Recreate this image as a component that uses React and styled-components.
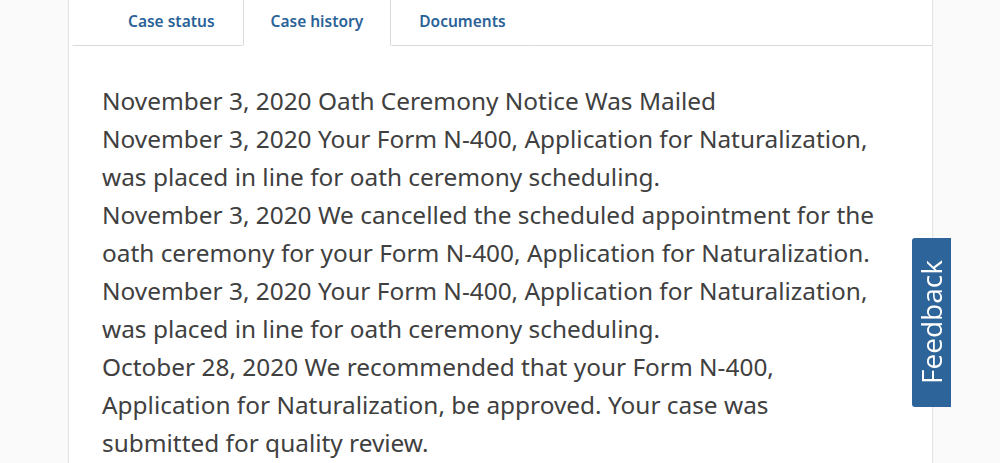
import React from 'react';
import styled, { createGlobalStyle } from 'styled-components';

const GlobalStyle = createGlobalStyle`
  html, body {
    margin: 0;
    padding: 0;
    background: #fafafa;
    overflow: hidden;
  }
  * {
    box-sizing: border-box;
  }
`;

const tabs = ['Case status', 'Case history', 'Documents'];

const history = [
  'November 3, 2020 Oath Ceremony Notice Was Mailed',
  'November 3, 2020 Your Form N-400, Application for Naturalization, was placed in line for oath ceremony scheduling.',
  'November 3, 2020 We cancelled the scheduled appointment for the oath ceremony for your Form N-400, Application for Naturalization.',
  'November 3, 2020 Your Form N-400, Application for Naturalization, was placed in line for oath ceremony scheduling.',
  'October 28, 2020 We recommended that your Form N-400, Application for Naturalization, be approved. Your case was submitted for quality review.',
];

const App = () => {
  return (
    <>
      <GlobalStyle />
      <Page>
        <Card>
          <TabList>
            {tabs.map(tab => (
              <Tab key={tab} $active={tab === 'Case history'}>
                {tab}
              </Tab>
            ))}
            <TabFill />
          </TabList>
          <HistoryList>
            {history.map((item, index) => (
              <HistoryItem key={index}>{item}</HistoryItem>
            ))}
          </HistoryList>
        </Card>
      </Page>
      <FeedbackButton>Feedback</FeedbackButton>
    </>
  );
};

const Page = styled.div`
  height: 463px;
  padding: 0 67px 0 68px;
`;

const Card = styled.div`
  height: 100%;
  background: #fff;
  border-left: 1px solid #e4e4e4;
  border-right: 1px solid #e4e4e4;
  box-shadow: 0 0 3px rgba(0, 0, 0, 0.04);
`;

const TabList = styled.div`
  display: flex;
  height: 46px;
  margin-left: 3px;
`;

const TabFill = styled.div`
  flex: 1;
  border-bottom: 1px solid #d9d9d9;
`;

const Tab = styled.div`
  display: flex;
  align-items: center;
  height: 46px;
  padding: 0 27px 4px;
  font-family: 'Noto Sans', sans-serif;
  font-size: 15.5px;
  font-weight: 600;
  color: #2b6297;
  background: #fff;
  border-left: 1px solid ${props => (props.$active ? '#d9d9d9' : 'transparent')};
  border-right: 1px solid ${props => (props.$active ? '#d9d9d9' : 'transparent')};
  border-bottom: 1px solid ${props => (props.$active ? '#fff' : '#d9d9d9')};

  &:first-child {
    padding-left: 55px;
  }
`;

const HistoryList = styled.div`
  padding: 36px 45px 0 33px;
  font-family: 'Noto Sans', sans-serif;
  font-size: 24.4px;
  line-height: 38px;
  color: #404040;
`;

const HistoryItem = styled.div``;

const FeedbackButton = styled.div`
  position: fixed;
  top: 238px;
  right: 49px;
  width: 39px;
  height: 169px;
  display: flex;
  align-items: center;
  justify-content: center;
  background: #2d6499;
  color: #fff;
  font-family: 'Open Sans', sans-serif;
  font-size: 28px;
  writing-mode: vertical-rl;
  transform: rotate(180deg);
  border-radius: 0 3px 3px 0;
`;

export default App;
